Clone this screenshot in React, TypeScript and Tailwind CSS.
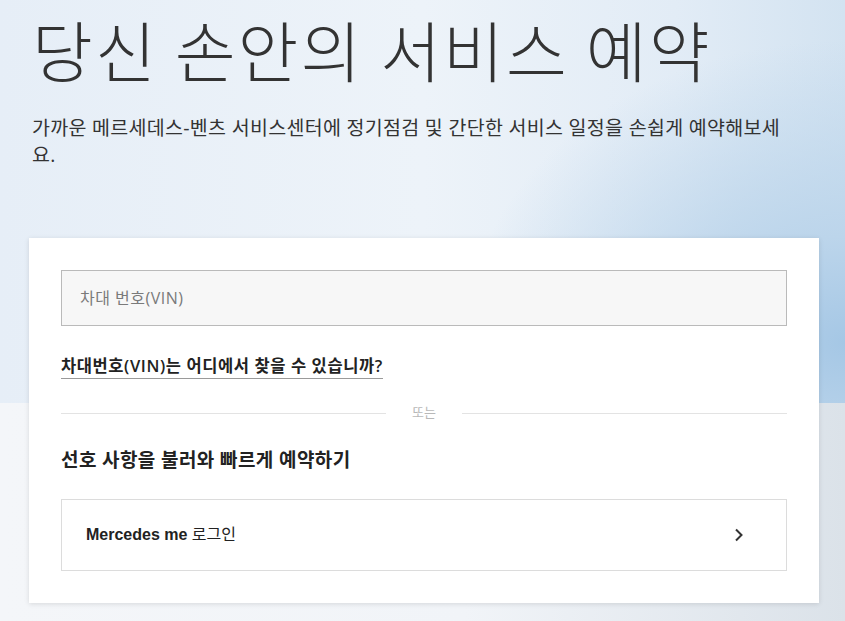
import React from "react";

const sans = "font-['Open_Sans','Noto_Sans_CJK_KR',sans-serif]";

const Divider: React.FC<{ label: string }> = ({ label }) => (
  <div className="flex items-center h-[26px] mt-[21px]">
    <div className="flex-1 h-px bg-[#e3e3e3]" />
    <span className="w-[76px] text-center text-[13px] text-[#b8b8b8]">{label}</span>
    <div className="flex-1 h-px bg-[#e3e3e3]" />
  </div>
);

export default function App() {
  return (
    <div className={`relative min-h-screen overflow-hidden ${sans}`}>
      {/* page backdrop */}
      <div className="absolute inset-0 bg-[linear-gradient(to_right,#f4f6f9_0%,#f1f4f8_55%,#dbe2e9_100%)]" />
      <div className="absolute inset-x-0 top-0 h-[403px] bg-[radial-gradient(ellipse_45%_75%_at_100%_85%,#a5c7e5_0%,#bcd5eb_35%,rgba(220,233,244,0)_100%),linear-gradient(to_right,#e6eef7_0%,#edf3f9_50%,#e2ecf6_80%,#d3e3f1_100%)]" />

      <div className="relative pl-[29px] pr-[26px] pb-[18px]">
        <div className="px-[3px]">
          <h1 className="font-['Noto_Sans_CJK_KR',serif] font-light text-[66px] leading-[96px] tracking-[2.2px] text-[#333]">
            당신 손안의 서비스 예약
          </h1>
          <p className="mt-[18px] w-[760px] text-[19.5px] tracking-[0.3px] leading-[27px] text-[#333]">
            가까운 메르세데스-벤츠 서비스센터에 정기점검 및 간단한 서비스 일정을 손쉽게 예약해보세요.
          </p>
        </div>

        <div className="mt-[70px] bg-white shadow-[0_1px_5px_rgba(0,0,0,0.12)] p-[32px]">
          <div className="h-[56px] border border-[#bababa] bg-[#f7f7f7] flex items-center px-[18px]">
            <span className="text-[16px] tracking-[0.5px] text-[#7a7a7a]">차대 번호(VIN)</span>
          </div>

          <div className="mt-[28px]">
            <a className="inline-block text-[16.5px] tracking-[0.6px] font-semibold text-[#222] leading-[22px] border-b border-[#9a9a9a] pb-[1px]">
              차대번호(VIN)는 어디에서 찾을 수 있습니까?
            </a>
          </div>

          <Divider label="또는" />

          <h2 className="mt-[21px] text-[19px] tracking-[0.4px] font-bold text-[#222] leading-[26px]">
            선호 사항을 불러와 빠르게 예약하기
          </h2>

          <div className="mt-[26px] h-[72px] border border-[#dcdcdc] flex items-center justify-between pl-[24px] pr-[42px]">
            <span className="font-['Liberation_Sans','Noto_Sans_CJK_KR',sans-serif] text-[16px] font-bold text-[#222]">
              Mercedes me <span className="font-normal">로그인</span>
            </span>
            <svg width="10" height="14" viewBox="0 0 10 14" fill="none">
              <path d="M2 1.5 L7.5 7 L2 12.5" stroke="#333" strokeWidth="2" />
            </svg>
          </div>
        </div>
      </div>
    </div>
  );
}
